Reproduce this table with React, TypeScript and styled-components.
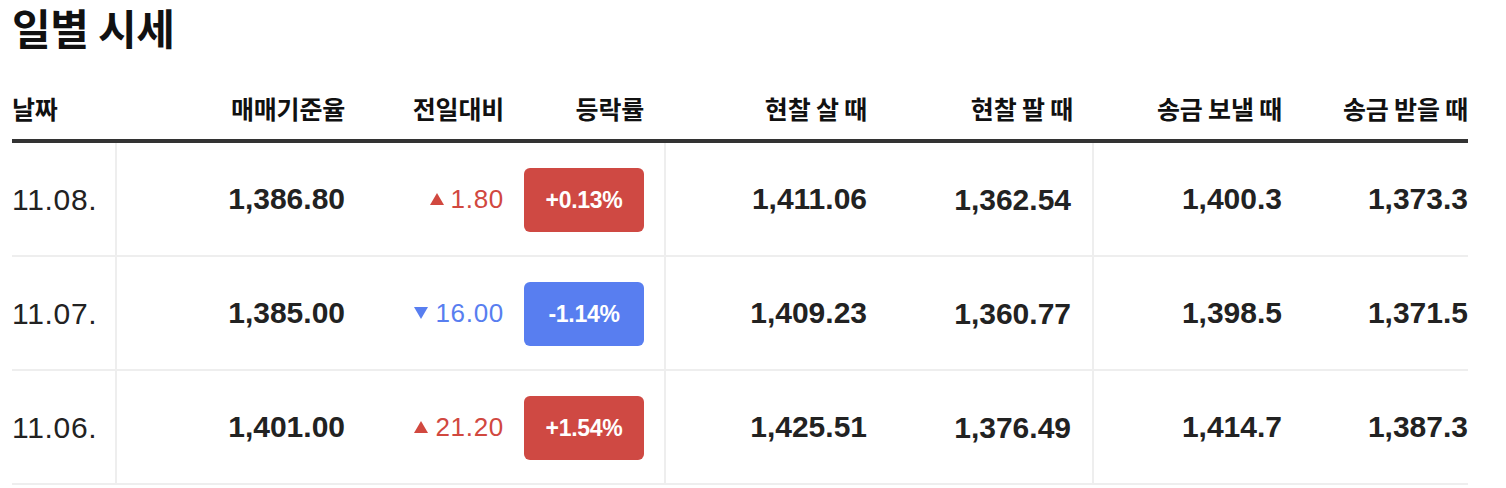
import React from "react";
import styled, { createGlobalStyle } from "styled-components";

const GlobalStyle = createGlobalStyle`
  html, body {
    margin: 0;
    padding: 0;
    background: #fff;
  }
  body {
    font-family: "Liberation Sans", "Noto Sans CJK KR", sans-serif;
    color: #222;
  }
`;

const Page = styled.div`
  padding: 0 38px 0 12px;
`;

const Title = styled.h2`
  margin: 0;
  font-family: "Noto Sans CJK KR", sans-serif;
  font-size: 42px;
  font-weight: 700;
  line-height: 54px;
  color: #111;
  letter-spacing: -0.3px;
`;

const COLUMNS = "105px 228px 159px 162px 201px 227px 188px 186px";

const HeaderRow = styled.div`
  display: grid;
  grid-template-columns: ${COLUMNS};
  align-items: center;
  height: 89px;
  padding-top: 23px;
  border-bottom: 4px solid #333;
  box-sizing: border-box;
`;

const HeadCell = styled.div<{ $left?: boolean; $pad?: number }>`
  font-family: "Noto Sans CJK KR", sans-serif;
  font-size: 25px;
  font-weight: 700;
  color: #111;
  letter-spacing: -0.2px;
  text-align: ${(p) => (p.$left ? "left" : "right")};
  padding-right: ${(p) => p.$pad ?? 0}px;
  white-space: nowrap;
`;

const Row = styled.div`
  display: grid;
  grid-template-columns: ${COLUMNS};
  height: 114px;
  border-bottom: 2px solid #eee;
  box-sizing: border-box;
`;

const Cell = styled.div<{ $left?: boolean; $pad?: number; $divider?: boolean; $bold?: boolean }>`
  display: flex;
  align-items: center;
  justify-content: ${(p) => (p.$left ? "flex-start" : "flex-end")};
  padding-right: ${(p) => p.$pad ?? 0}px;
  border-right: ${(p) => (p.$divider ? "2px solid #eee" : "none")};
  margin-bottom: ${(p) => (p.$divider ? "-2px" : "0")};
  box-sizing: border-box;
  font-size: 30px;
  font-weight: ${(p) => (p.$bold ? 700 : 400)};
  letter-spacing: ${(p) => (p.$bold ? "0" : "0.7px")};
  color: #222;
  white-space: nowrap;
`;

const Change = styled.span<{ $up: boolean }>`
  display: inline-flex;
  align-items: center;
  gap: 7px;
  font-size: 26px;
  color: ${(p) => (p.$up ? "#d1483f" : "#587ef0")};
`;

const Triangle = styled.span<{ $up: boolean }>`
  width: 0;
  height: 0;
  border-left: 7px solid transparent;
  border-right: 7px solid transparent;
  ${(p) =>
    p.$up
      ? "border-bottom: 12px solid #d1483f;"
      : "border-top: 12px solid #587ef0;"}
`;

const Badge = styled.span<{ $up: boolean }>`
  display: flex;
  align-items: center;
  justify-content: center;
  width: 120px;
  height: 64px;
  border-radius: 6px;
  background: ${(p) => (p.$up ? "#cf4943" : "#587ef0")};
  color: #fff;
  font-size: 23px;
  font-weight: 700;
  letter-spacing: -0.3px;
`;

interface DayRate {
  date: string;
  base: string;
  change: string;
  up: boolean;
  pct: string;
  cashBuy: string;
  cashSell: string;
  send: string;
  receive: string;
}

const rates: DayRate[] = [
  { date: "11.08.", base: "1,386.80", change: "1.80", up: true, pct: "+0.13%", cashBuy: "1,411.06", cashSell: "1,362.54", send: "1,400.3", receive: "1,373.3" },
  { date: "11.07.", base: "1,385.00", change: "16.00", up: false, pct: "-1.14%", cashBuy: "1,409.23", cashSell: "1,360.77", send: "1,398.5", receive: "1,371.5" },
  { date: "11.06.", base: "1,401.00", change: "21.20", up: true, pct: "+1.54%", cashBuy: "1,425.51", cashSell: "1,376.49", send: "1,414.7", receive: "1,387.3" },
];

function App() {
  return (
    <Page>
      <GlobalStyle />
      <Title>일별 시세</Title>
      <HeaderRow>
        <HeadCell $left>날짜</HeadCell>
        <HeadCell>매매기준율</HeadCell>
        <HeadCell>전일대비</HeadCell>
        <HeadCell $pad={22}>등락률</HeadCell>
        <HeadCell>현찰 살 때</HeadCell>
        <HeadCell $pad={21}>현찰 팔 때</HeadCell>
        <HeadCell>송금 보낼 때</HeadCell>
        <HeadCell>송금 받을 때</HeadCell>
      </HeaderRow>
      {rates.map((r) => (
        <Row key={r.date}>
          <Cell $left $divider $pad={2}>{r.date}</Cell>
          <Cell $bold>{r.base}</Cell>
          <Cell>
            <Change $up={r.up}>
              <Triangle $up={r.up} />
              {r.change}
            </Change>
          </Cell>
          <Cell $pad={20} $divider>
            <Badge $up={r.up}>{r.pct}</Badge>
          </Cell>
          <Cell $bold>{r.cashBuy}</Cell>
          <Cell $bold $pad={21} $divider>{r.cashSell}</Cell>
          <Cell $bold>{r.send}</Cell>
          <Cell $bold>{r.receive}</Cell>
        </Row>
      ))}
    </Page>
  );
}

export default App;
